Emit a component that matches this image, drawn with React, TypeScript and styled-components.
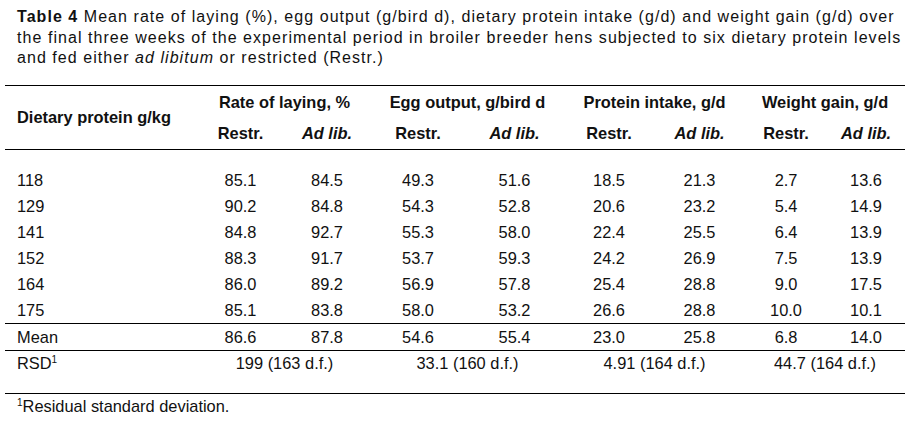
import React from "react";
import styled, { createGlobalStyle } from "styled-components";

const Global = createGlobalStyle`
  html, body { margin: 0; padding: 0; background: #fff; }
  body { font-family: "Liberation Sans", Arial, sans-serif; color: #111; }
`;

const Page = styled.div`
  width: 917px;
  height: 425px;
  padding: 7px 0 0 5px;
  box-sizing: border-box;
  overflow: hidden;
`;

const Caption = styled.p`
  margin: 0 0 0 12px;
  font-size: 16px;
  line-height: 20.5px;
  letter-spacing: 1.05px;
  white-space: nowrap;
`;

const Table = styled.table`
  margin-top: 16px;
  width: 900px;
  border-collapse: collapse;
  table-layout: fixed;
  font-size: 16.4px;
  border-top: 1.6px solid #000;
`;

const Th = styled.th<{ $align?: string; $italic?: boolean }>`
  font-weight: bold;
  font-style: ${(p) => (p.$italic ? "italic" : "normal")};
  text-align: ${(p) => p.$align || "center"};
  padding: ${(p) => (p.$align === "left" ? "0 0 0 12px" : "0")};
  vertical-align: middle;
`;

const HeadRow = styled.tr<{ $rule?: boolean; $h: number }>`
  height: ${(p) => p.$h}px;
  border-bottom: ${(p) => (p.$rule ? "1.6px solid #000" : "none")};
`;

const Row = styled.tr<{ $rule?: boolean; $h?: number }>`
  height: ${(p) => p.$h || 26}px;
  border-bottom: ${(p) => (p.$rule ? "1.6px solid #000" : "none")};
`;

const Td = styled.td<{ $left?: boolean; $top?: boolean }>`
  text-align: ${(p) => (p.$left ? "left" : "center")};
  padding: ${(p) => (p.$left ? "0 0 0 12px" : "0")};
  padding-top: ${(p) => (p.$top ? "2px" : "0")};
  vertical-align: ${(p) => (p.$top ? "top" : "middle")};
  line-height: 20px;
`;

const Footnote = styled.p`
  margin: 3px 0 0 12px;
  font-size: 16.4px;
`;

const Sup = styled.sup`
  font-size: 10px;
  vertical-align: 6px;
  line-height: 0;
`;

const widths = [193, 85, 88, 94, 99, 90, 91, 82, 78];

const data: [string, string[]][] = [
  ["118", ["85.1", "84.5", "49.3", "51.6", "18.5", "21.3", "2.7", "13.6"]],
  ["129", ["90.2", "84.8", "54.3", "52.8", "20.6", "23.2", "5.4", "14.9"]],
  ["141", ["84.8", "92.7", "55.3", "58.0", "22.4", "25.5", "6.4", "13.9"]],
  ["152", ["88.3", "91.7", "53.7", "59.3", "24.2", "26.9", "7.5", "13.9"]],
  ["164", ["86.0", "89.2", "56.9", "57.8", "25.4", "28.8", "9.0", "17.5"]],
  ["175", ["85.1", "83.8", "58.0", "53.2", "26.6", "28.8", "10.0", "10.1"]],
];

const groups = ["Rate of laying, %", "Egg output, g/bird d", "Protein intake, g/d", "Weight gain, g/d"];
const rsd = ["199 (163 d.f.)", "33.1 (160 d.f.)", "4.91 (164 d.f.)", "44.7 (164 d.f.)"];
const means = ["86.6", "87.8", "54.6", "55.4", "23.0", "25.8", "6.8", "14.0"];

export default function App() {
  return (
    <>
      <Global />
      <Page>
        <Caption>
          <b>Table 4</b> Mean rate of laying (%), egg output (g/bird d), dietary protein intake (g/d) and weight gain (g/d) over
          <br />
          the final three weeks of the experimental period in broiler breeder hens subjected to six dietary protein levels
          <br />
          and fed either <i>ad libitum</i> or restricted (Restr.)
        </Caption>
        <Table>
          <colgroup>
            {widths.map((w, i) => (
              <col key={i} style={{ width: w }} />
            ))}
          </colgroup>
          <thead>
            <HeadRow $h={34}>
              <Th $align="left" rowSpan={2}>Dietary protein g/kg</Th>
              {groups.map((g) => (
                <Th key={g} colSpan={2}>{g}</Th>
              ))}
            </HeadRow>
            <HeadRow $rule $h={30}>
              {groups.map((g) => (
                <React.Fragment key={g}>
                  <Th>Restr.</Th>
                  <Th $italic>Ad lib.</Th>
                </React.Fragment>
              ))}
            </HeadRow>
          </thead>
          <tbody>
            <Row $h={18}>
              <Td colSpan={9} />
            </Row>
            {data.map(([k, vals], i) => (
              <Row key={k} $rule={i === data.length - 1}>
                <Td $left>{k}</Td>
                {vals.map((v, j) => (
                  <Td key={j}>{v}</Td>
                ))}
              </Row>
            ))}
            <Row $rule $h={27}>
              <Td $left>Mean</Td>
              {means.map((v, j) => (
                <Td key={j}>{v}</Td>
              ))}
            </Row>
            <Row $rule $h={43}>
              <Td $left $top>
                RSD<Sup>1</Sup>
              </Td>
              {rsd.map((r) => (
                <Td key={r} colSpan={2} $top>{r}</Td>
              ))}
            </Row>
          </tbody>
        </Table>
        <Footnote>
          <Sup>1</Sup>Residual standard deviation.
        </Footnote>
      </Page>
    </>
  );
}
